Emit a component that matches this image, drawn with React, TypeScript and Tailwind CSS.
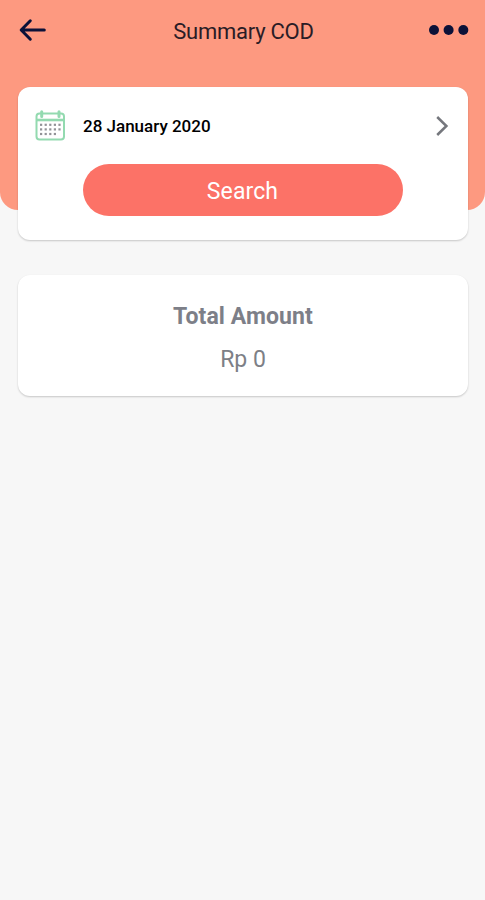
import { useState } from "react";

function BackIcon() {
  return (
    <svg width="28" height="24" viewBox="0 0 28 24" fill="none" stroke="#0b1138" strokeWidth="3" strokeLinecap="round" strokeLinejoin="round">
      <path d="M26.3 12H3.8M12.3 2.8L3.2 12L12.3 21.2" />
    </svg>
  );
}

function MoreIcon() {
  return (
    <svg width="40" height="12" viewBox="0 0 40 12" fill="#0b1138">
      <circle cx="5" cy="6" r="5" />
      <circle cx="19.6" cy="6" r="5" />
      <circle cx="34.3" cy="6" r="5" />
    </svg>
  );
}

// date cells per row, the last row is one short
const cells = [5, 5, 4];

function CalendarIcon() {
  return (
    <svg width="32" height="32" viewBox="0 0 32 32" fill="none">
      <rect x="2.5" y="3.5" width="27.5" height="26" rx="3" stroke="#93dab0" strokeWidth="2" />
      <path d="M2.5 10H30" stroke="#93dab0" strokeWidth="2.6" />
      <path d="M7.7 1.8V6.5M25 1.8V6.5" stroke="#93dab0" strokeWidth="3" strokeLinecap="round" />
      {cells.map((count, row) =>
        Array.from({ length: count }, (_, col) => (
          <rect key={`${row}-${col}`} x={6 + col * 4.6} y={13.7 + row * 4.6} width="2.2" height="2.2" fill="#929297" />
        ))
      )}
    </svg>
  );
}

function ChevronIcon() {
  return (
    <svg width="14" height="22" viewBox="0 0 14 22" fill="none" stroke="#75777d" strokeWidth="2.5">
      <path d="M2.2 2L11.4 11L2.2 20" />
    </svg>
  );
}

export default function App() {
  const [date] = useState("28 January 2020");
  const [total] = useState(0);

  return (
    <div className="min-h-screen bg-[#f7f7f7] font-['Roboto',sans-serif]">
      {/* Header */}
      <header className="h-[210px] rounded-b-[18px] bg-[#fd9980]">
        <div className="flex h-[61px] items-center justify-between pr-4 pl-[18px]">
          <button className="-mt-px flex w-10" aria-label="Back">
            <BackIcon />
          </button>
          <h1 className="pt-0.5 text-[22px] leading-7 tracking-[-0.25px] text-[#2a1c26]">Summary COD</h1>
          <button className="-mt-px flex w-10" aria-label="More">
            <MoreIcon />
          </button>
        </div>
      </header>

      <main className="-mt-[123px] flex flex-col gap-[35px] pr-[17px] pl-[18px]">
        {/* Date filter */}
        <section className="h-[153px] rounded-xl bg-white shadow-[0_1px_2px_rgba(0,0,0,0.2)]">
          <button className="flex h-[77px] w-full items-center pr-[19px] pl-4">
            <CalendarIcon />
            <span className="ml-[17px] pt-0.5 text-[17px] font-medium text-black">{date}</span>
            <span className="ml-auto">
              <ChevronIcon />
            </span>
          </button>
          <button className="ml-[65px] flex h-[52px] w-80 items-center justify-center rounded-full bg-[#fc7267] pt-1 pr-px text-[23px] tracking-[0.1px] text-white">
            Search
          </button>
        </section>

        {/* Total */}
        <section className="flex h-[121px] flex-col items-center rounded-xl bg-white pt-[27px] shadow-[0_1px_2px_rgba(0,0,0,0.2)]">
          <h2 className="text-[23px] leading-[30px] font-bold tracking-[0.1px] text-[#7d7f88]">Total Amount</h2>
          <p className="mt-[13px] text-[23px] leading-[30px] text-[#7d7f86]">Rp {total}</p>
        </section>
      </main>
    </div>
  );
}
